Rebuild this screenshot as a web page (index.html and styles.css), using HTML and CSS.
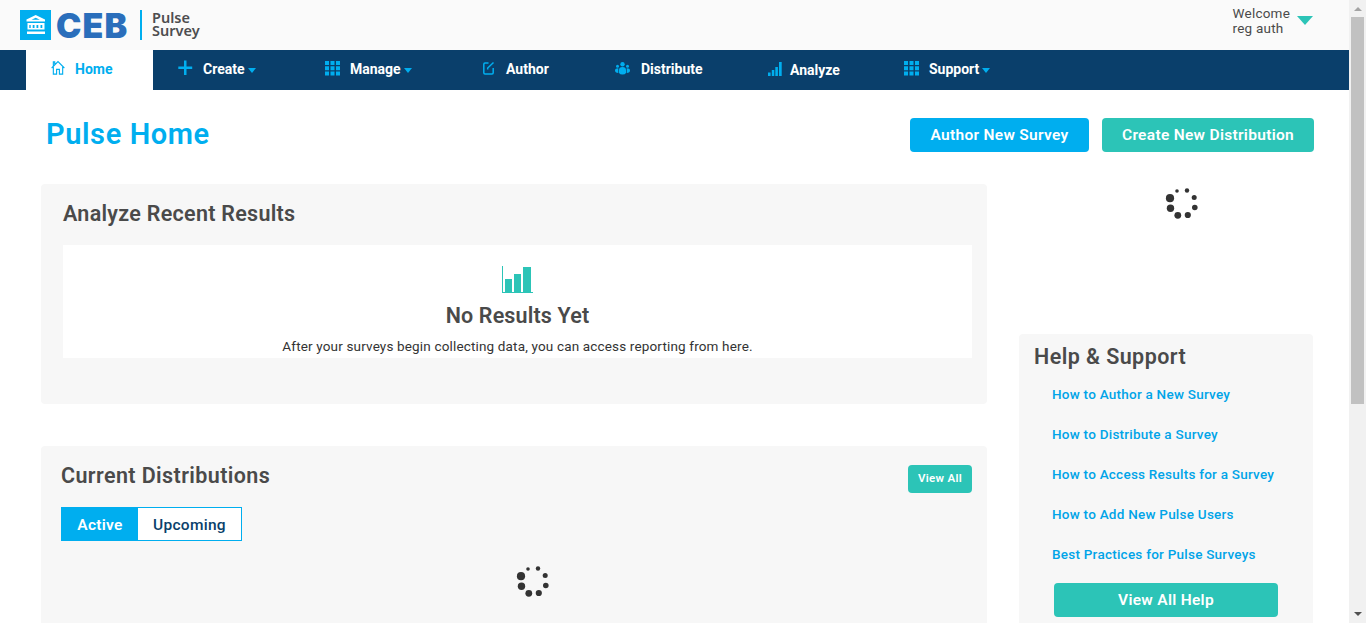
FILE: index.html
```html
<!DOCTYPE html>
<html lang="en">
<head>
<meta charset="utf-8">
<title>Pulse Survey</title>
<link rel="stylesheet" href="styles.css">
</head>
<body>
<svg class="defs" width="0" height="0">
  <symbol id="grid" viewBox="0 0 15 15"><path d="M0 0h4v4H0zM5.5 0h4v4h-4zM11 0h4v4h-4zM0 5.3h4v4H0zM5.5 5.3h4v4h-4zM11 5.3h4v4h-4zM0 10.5h4v4H0zM5.5 10.5h4v4h-4zM11 10.5h4v4h-4z" fill="#00aeef"/></symbol>
  <symbol id="spinner" viewBox="0 0 34 34"><g fill="#333"><circle cx="12" cy="6" r="1.8"/><circle cx="22" cy="5.5" r="2.2"/><circle cx="29.2" cy="12.5" r="2.5"/><circle cx="29.8" cy="22.5" r="2.8"/><circle cx="22.8" cy="30" r="3.1"/><circle cx="12.8" cy="30.3" r="3.4"/><circle cx="5.5" cy="23.3" r="3.7"/><circle cx="5" cy="13.2" r="4.1"/></g></symbol>
</svg>
<div class="window">
  <div class="page">
    <header class="header">
      <div class="brand">
        <svg class="brand-mark" width="31" height="30" viewBox="0 0 31 30"><path fill="#00aeef" d="M0 0h31v30H0z"/><path fill="#fff" d="M15.7 5L25 9.6V11.500H6.500V9.600zM7.500 13h17v6h-2.200v-4h-1.800v4h-2.200v-4h-1.800v4h-2v-4h-1.800v4h-2v-4h-1.400v4H7.500zM7.500 18h17v1.500h-17zM7 21.500h18v2.500H7z"/><path fill="#00aeef" d="M11.500 9.700l4.200-2 4.200 2z"/></svg>
        <span class="brand-name">CEB</span>
        <span class="brand-rule"></span>
        <span class="brand-product">Pulse<br>Survey</span>
      </div>
      <div class="user"><span>Welcome<br>reg auth</span><i class="user-caret"></i></div>
    </header>
    <nav class="nav">
      <a class="nav-item home active"><svg width="14" height="16" viewBox="0 0 15 16" fill="none" stroke="#00aeef" stroke-width="1.200"><path d="M.7 8L7.500 1.200 14.300 8M2.500 7v7.500h3.500V9.500h3v5h3.500V7M2.500 5.500v-4h1.500v2.500"/></svg><span>Home</span></a>
      <a class="nav-item create"><svg width="15" height="15" viewBox="0 0 15 15"><path d="M6 .5h2.500v6h5.700V9H8.500v6H6V9H.3V6.500H6z" fill="#00aeef"/></svg><span>Create</span><i class="caret"></i></a>
      <a class="nav-item manage"><svg class="grid-icon" width="15" height="15"><use href="#grid"/></svg><span>Manage</span><i class="caret"></i></a>
      <a class="nav-item author"><svg width="12" height="14" viewBox="0 0 12 14" fill="none" stroke="#00aeef" stroke-width="1.500"><path d="M5.500 2H2Q.8 2 .8 3.200v8.600Q.8 13 2 13h7q1.200 0 1.200-1.200V7M4.700 8.500V7L10.500 1.500"/></svg><span>Author</span></a>
      <a class="nav-item distribute"><svg width="15" height="13" viewBox="0 0 15 13" fill="#00aeef"><circle cx="7.500" cy="2.300" r="2.200"/><circle cx="2.500" cy="4.200" r="1.500"/><circle cx="12.500" cy="4.200" r="1.500"/><path d="M4 8q0-3 3.500-3T11 8v3q-1 1.500-3.500 1.500T4 11zM0 8.500Q0 6.200 3.300 6.200V11Q0 10.800 0 8.500zM15 8.500q0-2.300-3.300-2.300V11Q15 10.800 15 8.500z"/></svg><span>Distribute</span></a>
      <a class="nav-item analyze"><svg width="14" height="14" viewBox="0 0 14 14"><path d="M0 10.500h2.600V14H0zM3.800 8h2.500v6H3.800zM7.300 5h2.600v9H7.300zM11 0h2.700v14H11z" fill="#00aeef"/></svg><span>Analyze</span></a>
      <a class="nav-item support"><svg class="grid-icon" width="15" height="15"><use href="#grid"/></svg><span>Support</span><i class="caret"></i></a>
    </nav>
    <div class="title-bar">
      <h1>Pulse Home</h1>
      <div class="actions">
        <a class="button primary">Author New Survey</a>
        <a class="button create-dist">Create New Distribution</a>
      </div>
    </div>
    <div class="columns">
      <main class="main">
        <section class="panel results">
          <h2>Analyze Recent Results</h2>
          <div class="empty">
            <svg width="31" height="27" viewBox="0 0 31 27" fill="#2cc4b7"><path d="M0 0h1v26h30v1H0zM3 13h7v13H3zM12 8h7v18h-7zM21 1h8v25h-8z"/></svg>
            <h3>No Results Yet</h3>
            <p>After your surveys begin collecting data, you can access reporting from here.</p>
          </div>
        </section>
        <section class="panel distributions">
          <div class="panel-head"><h2>Current Distributions</h2><a class="button small">View All</a></div>
          <div class="tabs"><a class="tab selected">Active</a><a class="tab">Upcoming</a></div>
          <svg class="spinner" width="34" height="34"><use href="#spinner"/></svg>
        </section>
      </main>
      <aside class="side">
        <div class="loading"><svg width="34" height="34"><use href="#spinner"/></svg></div>
        <section class="panel help">
          <h2>Help &amp; Support</h2>
          <ul>
            <li>How to Author a New Survey</li>
            <li>How to Distribute a Survey</li>
            <li>How to Access Results for a Survey</li>
            <li>How to Add New Pulse Users</li>
            <li>Best Practices for Pulse Surveys</li>
          </ul>
          <a class="button help-all">View All Help</a>
        </section>
      </aside>
    </div>
  </div>
  <div class="scrollbar"><i class="up"></i><div class="thumb"></div><i class="down"></i></div>
</div>
</body>
</html>
```
FILE: styles.css
```css
* { box-sizing: border-box; }
body { margin: 0; font-family: "Roboto", "Liberation Sans", sans-serif; color: #333; overflow: hidden; }
h1, h2, h3, p, ul { margin: 0; padding: 0; }
ul { list-style: none; }
svg { display: block; flex: none; }
.defs { position: absolute; }
.window { display: flex; height: 623px; overflow: hidden; }
.page { width: 1349px; flex: none; background: #fff; }

.header { height: 50px; background: #fafafa; display: flex; justify-content: space-between; padding: 0 36px 0 20px; }
.brand { display: flex; padding-top: 10px; }
.brand-name { font: 900 34px/31px "Inter", sans-serif; color: #2a6ebb; width: 75px; margin-left: 5px; letter-spacing: 1.100px; }
.brand-rule { width: 2px; height: 30px; background: #00aeef; margin-left: 9px; }
.brand-product { font: 600 14.500px/13px "Noto Sans", sans-serif; color: #4d4d4f; margin: 1px 0 0 10px; }
.user { display: flex; font-size: 13.500px; letter-spacing: 0.200px; line-height: 15px; color: #4a4a4a; padding-top: 6px; gap: 7px; }
.user-caret { border: 8px solid transparent; border-top: 9px solid #2cc4b7; border-bottom: 0; margin-top: 10px; }

.nav { display: flex; height: 40px; background: #0a3f6b; padding-left: 26px; }
.nav-item { display: flex; align-items: flex-start; padding: 10px 0 0 25px; font-size: 14px; letter-spacing: 0; font-weight: 700; line-height: 19px; color: #fff; }
.nav-item.active { background: #fff; color: #00aeef; }
.nav-item span { margin-left: 10px; }
.grid-icon { margin-top: 1px; }
.home { width: 127px; }
.create { width: 147px; }
.manage { width: 158px; }
.author { width: 132px; }
.author span { margin-left: 11px; }
.author svg { margin-top: 1px; }
.distribute { width: 153px; }
.distribute span { margin-left: 11px; }
.distribute svg { margin-top: 2px; }
.analyze { width: 136px; }
.analyze svg { margin-top: 2px; }
.analyze span { margin: 1px 0 0 8px; }
.caret { border: 4px solid transparent; border-top: 5px solid #00aeef; border-bottom: 0; margin: 8px 0 0 3px; }

.title-bar { display: flex; justify-content: space-between; padding: 28px 35px 0 46px; height: 94px; }
h1 { font-size: 29px; letter-spacing: 0.600px; line-height: 33px; color: #00aeef; font-weight: 600; }
.actions { display: flex; gap: 13px; }
.button { display: flex; align-items: center; justify-content: center; height: 34px; border-radius: 4px; background: #2cc4b7; color: #fff; font-size: 15.500px; letter-spacing: 0.300px; font-weight: 600; white-space: nowrap; padding-bottom: 1px; }
.button.primary { background: #00aeef; width: 179px; }
.create-dist { width: 212px; }

.columns { display: flex; gap: 32px; padding-left: 41px; }
.main { width: 946px; }
.panel { background: #f7f7f7; border-radius: 4px; }
h2, h3 { font-size: 21.500px; letter-spacing: 0.280px; font-weight: 600; line-height: 29px; color: #4a4a4a; white-space: nowrap; }
.results { height: 220px; padding: 15px 15px 0 22px; }
.empty { display: flex; flex-direction: column; align-items: center; background: #fff; height: 113px; margin-top: 17px; padding-top: 21px; }
.empty h3 { margin-top: 8px; letter-spacing: 0.150px; }
.empty p { font-size: 13.500px; letter-spacing: 0.160px; line-height: 20px; margin-top: 6px; color: #333; }
.distributions { height: 220px; margin-top: 42px; padding: 15px 15px 0 20px; }
.panel-head { display: flex; justify-content: space-between; height: 32px; }
.panel-head h2 { letter-spacing: 0.400px; }
.small { width: 64px; height: 28px; font-size: 11.500px; margin-top: 4px; padding-bottom: 2px; }
.tabs { display: flex; width: 181px; height: 34px; margin-top: 14px; border: 1px solid #00aeef; background: #fff; }
.tab { width: 103px; text-align: center; font-size: 15.500px; letter-spacing: 0.280px; font-weight: 500; line-height: 34px; color: #0a3f6b; }
.tab.selected { width: 76px; background: #00aeef; color: #fff; font-weight: 600; }
.spinner { margin: 22px 0 0 455px; }

.side { width: 294px; }
.loading { height: 150px; padding: 1px 0 0 146px; }
.help { height: 320px; padding: 8px 15px 0; }
.help h2 { letter-spacing: 0.430px; }
.help ul { margin: 13px 0 0 18px; }
.help li { height: 40px; font-size: 13.500px; letter-spacing: 0.240px; font-weight: 500; line-height: 20px; color: #00a4e8; white-space: nowrap; }
.help-all { width: 224px; margin: -1px 0 0 20px; }

.scrollbar { width: 17px; background: #f1f1f1; display: flex; flex-direction: column; align-items: center; }
.up { border: 4px solid transparent; border-bottom-color: #a3a3a3; border-top: 0; margin-top: 7px; }
.thumb { width: 13px; height: 387px; background: #c1c1c1; margin-top: 6px; }
.down { border: 4px solid transparent; border-top-color: #505050; border-bottom: 0; margin-top: auto; margin-bottom: 7px; }
```
